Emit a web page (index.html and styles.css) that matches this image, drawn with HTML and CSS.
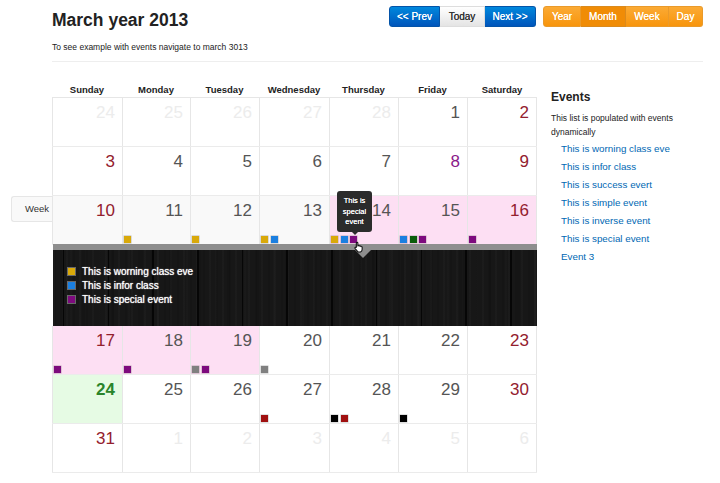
FILE: index.html
```html
<!DOCTYPE html>
<html lang="en">
<head>
<meta charset="utf-8">
<title>March year 2013</title>
<link rel="stylesheet" href="styles.css">
</head>
<body>
<div class="page">
  <header class="top">
    <div class="heading">
      <h1>March year 2013</h1>
      <p>To see example with events navigate to march 3013</p>
    </div>
    <div class="toolbar">
      <div class="group">
        <button class="btn blue prev">&lt;&lt; Prev</button>
        <button class="btn plain today">Today</button>
        <button class="btn blue next">Next &gt;&gt;</button>
      </div>
      <div class="group">
        <button class="btn orange year">Year</button>
        <button class="btn orange active month">Month</button>
        <button class="btn orange wk">Week</button>
        <button class="btn orange day">Day</button>
      </div>
    </div>
  </header>
  <main class="main">
    <section class="calendar">
      <div class="row head">
        <div>Sunday</div><div>Monday</div><div>Tuesday</div><div>Wednesday</div><div>Thursday</div><div>Friday</div><div>Saturday</div>
      </div>
      <div class="weeks">
        <div class="row week">
          <div class="cell muted"><span class="num">24</span></div>
          <div class="cell muted"><span class="num">25</span></div>
          <div class="cell muted"><span class="num">26</span></div>
          <div class="cell muted"><span class="num">27</span></div>
          <div class="cell muted"><span class="num">28</span></div>
          <div class="cell"><span class="num">1</span></div>
          <div class="cell red"><span class="num">2</span></div>
        </div>
        <div class="row week">
          <div class="cell red"><span class="num">3</span></div>
          <div class="cell"><span class="num">4</span></div>
          <div class="cell"><span class="num">5</span></div>
          <div class="cell"><span class="num">6</span></div>
          <div class="cell"><span class="num">7</span></div>
          <div class="cell purple"><span class="num">8</span></div>
          <div class="cell red"><span class="num">9</span></div>
        </div>
        <div class="row week hover">
          <div class="tab">Week</div>
          <div class="cell red"><span class="num">10</span></div>
          <div class="cell"><span class="num">11</span><div class="dots"><i class="warn"></i></div></div>
          <div class="cell"><span class="num">12</span><div class="dots"><i class="warn"></i></div></div>
          <div class="cell"><span class="num">13</span><div class="dots"><i class="warn"></i><i class="info"></i></div></div>
          <div class="cell pink"><span class="num">14</span><div class="dots"><i class="warn"></i><i class="info"></i><i class="special"></i></div>
            <div class="tip">This is special event</div>
            <svg class="hand" viewBox="0 0 12 14" aria-hidden="true"><path d="M3.600 1.200c.7 0 1 .5 1 1.100v3.200l.6-.1c.4-.1.800 0 1 .3.500-.2 1-.1 1.200.3.500-.2 1.100 0 1.300.5.600-.1 1.100.3 1.100 1v2.200c0 1.300-.9 2.800-2 3.300H4.900C4 12.200 2.800 10.400 1.400 8.900c-.6-.7-.3-1.400.4-1.500.5 0 1 .3 1 .6V2.300c0-.6.200-1.100.8-1.100z" fill="#fff" stroke="#111" stroke-width="1.300"/></svg>
          </div>
          <div class="cell pink"><span class="num">15</span><div class="dots"><i class="info"></i><i class="ok"></i><i class="special"></i></div></div>
          <div class="cell pink red"><span class="num">16</span><div class="dots"><i class="special"></i></div></div>
        </div>
        <div class="slide">
          <div class="arrow"></div>
          <ul>
            <li><i class="warn"></i>This is worning class eve</li>
            <li><i class="info"></i>This is infor class</li>
            <li><i class="special"></i>This is special event</li>
          </ul>
        </div>
        <div class="row week">
          <div class="cell pink red"><span class="num">17</span><div class="dots"><i class="special"></i></div></div>
          <div class="cell pink"><span class="num">18</span><div class="dots"><i class="special"></i></div></div>
          <div class="cell pink"><span class="num">19</span><div class="dots"><i class="simple"></i><i class="special"></i></div></div>
          <div class="cell"><span class="num">20</span><div class="dots"><i class="simple"></i></div></div>
          <div class="cell"><span class="num">21</span></div>
          <div class="cell"><span class="num">22</span></div>
          <div class="cell red"><span class="num">23</span></div>
        </div>
        <div class="row week">
          <div class="cell now"><span class="num">24</span></div>
          <div class="cell"><span class="num">25</span></div>
          <div class="cell"><span class="num">26</span></div>
          <div class="cell"><span class="num">27</span><div class="dots"><i class="danger"></i></div></div>
          <div class="cell"><span class="num">28</span><div class="dots"><i class="inverse"></i><i class="danger"></i></div></div>
          <div class="cell"><span class="num">29</span><div class="dots"><i class="inverse"></i></div></div>
          <div class="cell red"><span class="num">30</span></div>
        </div>
        <div class="row week last">
          <div class="cell red"><span class="num">31</span></div>
          <div class="cell muted"><span class="num">1</span></div>
          <div class="cell muted"><span class="num">2</span></div>
          <div class="cell muted"><span class="num">3</span></div>
          <div class="cell muted"><span class="num">4</span></div>
          <div class="cell muted"><span class="num">5</span></div>
          <div class="cell muted"><span class="num">6</span></div>
        </div>
      </div>
    </section>
    <aside class="side">
      <h2>Events</h2>
      <p>This list is populated with events dynamically</p>
      <ul>
        <li><a href="#">This is worning class eve</a></li>
        <li><a href="#">This is infor class</a></li>
        <li><a href="#">This is success evert</a></li>
        <li><a href="#">This is simple event</a></li>
        <li><a href="#">This is inverse event</a></li>
        <li><a href="#">This is special event</a></li>
        <li><a href="#">Event 3</a></li>
      </ul>
    </aside>
  </main>
</div>
</body>
</html>
```
FILE: styles.css
```css
* { box-sizing: border-box; }
html, body { margin: 0; padding: 0; }
body {
  background: #fff;
  color: #222;
  font-family: "Liberation Sans", Arial, sans-serif;
  width: 720px;
  height: 483px;
  overflow: hidden;
}
.page { padding: 6px 17px 0 52px; }

.top {
  display: flex;
  justify-content: space-between;
  align-items: flex-start;
  height: 56px;
  border-bottom: 1px solid #eee;
}
.heading h1 {
  margin: 5px 0 0;
  font-size: 17.5px;
  line-height: 18px;
  font-weight: 700;
  color: #222;
}
.heading p {
  margin: 13px 0 0;
  font-size: 8.5px;
  line-height: 10px;
  color: #222;
}
.toolbar { display: flex; gap: 7px; }
.group { display: flex; height: 21px; }
.btn {
  height: 21px;
  padding: 0;
  margin: 0;
  font-family: inherit;
  font-size: 10px;
  line-height: 19px;
  border: 1px solid;
  border-left-width: 0;
  text-shadow: 0 0 .5px currentColor;
}
.group .btn:first-child { border-left-width: 1px; border-radius: 3px 0 0 3px; }
.group .btn:last-child { border-radius: 0 3px 3px 0; }
.blue {
  background: linear-gradient(#0088dd, #0055bb);
  border-color: #0454a8;
  color: #fff;
}
.plain {
  background: linear-gradient(#fff, #e4e4e4);
  border-color: #ddd;
  color: #333;
}
.orange {
  background: linear-gradient(#fbaa34, #f8950c);
  border-color: #ea9a2a;
  color: #fff;
}
.orange.active { background: #f08c06; border-color: #db8a1c; }
.prev { width: 51px; }
.today { width: 45px; }
.next { width: 51px; }
.year { width: 38px; }
.month { width: 45px; }
.wk { width: 43px; }
.day { width: 34px; }

.main { display: flex; }
.calendar { width: 485px; flex: none; }
.row {
  display: grid;
  grid-template-columns: 70px 68px 69px 70px 69px 69px 70px;
}
.head {
  height: 35px;
  padding-top: 22px;
  font-size: 9.5px;
  line-height: 12px;
  font-weight: 700;
  color: #222;
  text-align: center;
}
.weeks { border-top: 1px solid #e6e6e6; }
.week { position: relative; height: 49px; border-bottom: 1px solid #ebebeb; }
.cell {
  position: relative;
  border-left: 1px solid #e6e6e6;
  text-align: right;
  padding: 5px 7px 0 0;
  color: #555;
}
.cell:last-child { border-right: 1px solid #e6e6e6; }
.num {
  font-size: 17px;
  line-height: 20px;
  font-weight: 400;
}
.hover .cell { background: #f9f9f9; }
.hover .cell.pink, .cell.pink { background: #fddff3; }
.cell.red { color: #93202e; }
.cell.purple { color: #8a1a8a; }
.cell.muted { color: #ececec; }
.cell.now { background: #e6fbe4; color: #2a842a; }
.cell.now .num { font-weight: 700; }

.dots {
  position: absolute;
  left: 1px;
  bottom: 1px;
  display: flex;
  gap: 2.5px;
}
i {
  display: block;
  width: 7px;
  height: 7px;
  flex: none;
  box-shadow: 0 0 0 .5px rgba(0, 0, 0, .25);
}
.warn { background: #d9a90a; }
.info { background: #1b7fe0; }
.special { background: #7d0a7d; }
.ok { background: #0a5c0a; }
.simple { background: #808080; }
.danger { background: #a01010; }
.inverse { background: #000; }

.tab {
  position: absolute;
  left: -41px;
  top: 0;
  width: 41px;
  height: 26px;
  background: #f9f9f9;
  border: 1px solid #e6e6e6;
  border-right: 0;
  border-radius: 3px 0 0 3px;
  font-size: 9.5px;
  line-height: 24px;
  padding-left: 13px;
  color: #333;
}

.slide {
  position: relative;
  width: 484px;
  height: 82px;
  margin: -1px 0 0 1px;
  border-top: 6px solid #8e8e8e;
  background-color: #171717;
  background-image:
    repeating-linear-gradient(90deg, #060606 0 1.500px, transparent 1.500px 44.700px),
    repeating-linear-gradient(90deg, rgba(255, 255, 255, .02) 0 2px, transparent 2px 7px, rgba(0, 0, 0, .1) 7px 9px, transparent 9px 13px),
    repeating-linear-gradient(90deg, rgba(0, 0, 0, .1) 0 3px, transparent 3px 17px, rgba(255, 255, 255, .012) 17px 19px, transparent 19px 29px);
  background-position: 10px 0, 0 0, 0 0;
  padding: 15px 0 0 15px;
}
.arrow {
  position: absolute;
  left: 302px;
  top: 0;
  width: 0;
  height: 0;
  border-left: 8px solid transparent;
  border-right: 8px solid transparent;
  border-top: 8px solid #8e8e8e;
}
.slide ul { margin: 0; padding: 0; list-style: none; }
.slide li {
  display: flex;
  align-items: center;
  gap: 7px;
  height: 13.700px;
  font-size: 10px;
  color: #fff;
  text-shadow: 0 0 1px #fff;
}
.slide i { box-shadow: 0 0 0 1px rgba(255, 255, 255, .35); }

.tip {
  position: absolute;
  left: 7px;
  top: -5px;
  width: 35px;
  height: 41px;
  padding: 5px 2px 0;
  background: #2b2b2b;
  border-radius: 3px;
  color: #fff;
  font-size: 7.500px;
  line-height: 10.500px;
  text-align: center;
  text-shadow: 0 0 .5px #fff;
  z-index: 3;
}
.tip::after {
  content: "";
  position: absolute;
  left: 14.500px;
  bottom: -3px;
  border-left: 3px solid transparent;
  border-right: 3px solid transparent;
  border-top: 3px solid #2b2b2b;
}
.hand {
  position: absolute;
  left: 24px;
  top: 45px;
  width: 10px;
  height: 12px;
  z-index: 4;
}

.side { padding: 27px 0 0 14px; flex: 1; }
.side h2 {
  margin: 0;
  font-size: 12px;
  line-height: 16px;
  font-weight: 700;
  color: #222;
}
.side p {
  margin: 6px 0 0;
  font-size: 8.500px;
  line-height: 14px;
  color: #222;
}
.side ul { margin: 1px 0 0; padding: 0 0 0 10px; list-style: none; }
.side li { height: 18px; font-size: 9.800px; line-height: 18px; }
.side a { color: #0068b3; text-decoration: none; }
```
